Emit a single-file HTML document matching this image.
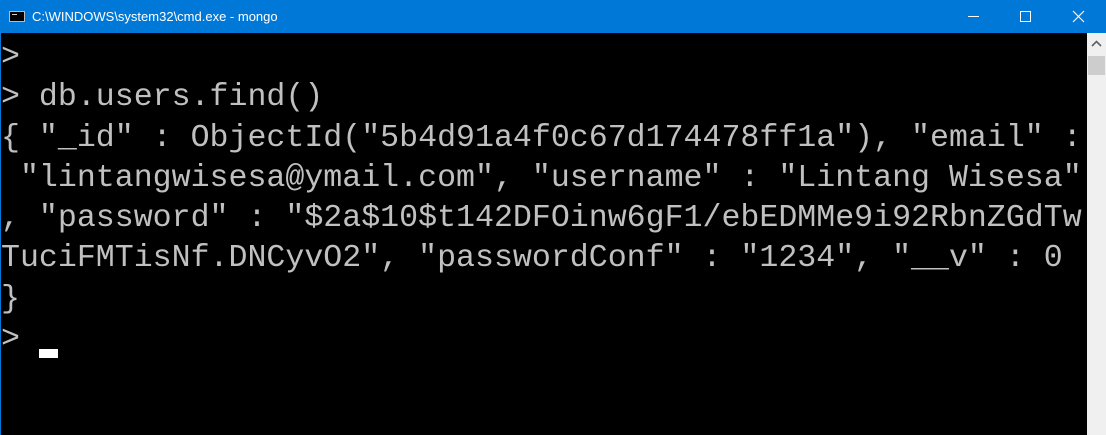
<!DOCTYPE html>
<html><head><style>
html,body{margin:0;padding:0;width:1106px;height:435px;overflow:hidden;background:#000;}
.title{position:absolute;left:0;top:0;width:1106px;height:33px;background:#0078d7;color:#fff;font-family:"Liberation Sans",sans-serif;font-size:13px;}
.title .t{position:absolute;left:32px;top:9px;}
.icon{position:absolute;left:9px;top:11px;width:16px;height:11px;background:#000;border:1px solid #bbb;box-sizing:border-box;}
.icon:after{content:"";position:absolute;left:2px;top:2px;width:5px;height:1px;background:#ccc;}
.lb{position:absolute;left:0;top:33px;width:1px;height:402px;background:#0078d7;}
.sb{position:absolute;left:1087px;top:33px;width:19px;height:402px;background:#f0f0f0;}
.thumb{position:absolute;left:1px;top:23px;width:17px;height:19px;background:#cdcdcd;}
pre{position:absolute;left:1px;top:38px;margin:0;font-family:"Liberation Mono",monospace;font-size:31.6px;line-height:40.3px;color:#c0c0c0;}
.cur{position:absolute;left:39px;top:349px;width:19px;height:9px;background:#fff;}
</style></head><body>
<div class="title"><div class="icon"></div><span class="t">C:\WINDOWS\system32\cmd.exe - mongo</span>
<svg style="position:absolute;left:960px;top:10px" width="140" height="15">
<line x1="8" y1="6.5" x2="19" y2="6.5" stroke="#fff" stroke-width="1"/>
<rect x="60.5" y="1.5" width="10" height="10" fill="none" stroke="#fff" stroke-width="1"/>
<path d="M113 1 L124 12 M124 1 L113 12" stroke="#fff" stroke-width="1.1"/>
</svg></div>
<div class="lb"></div>
<pre>&gt;
&gt; db.users.find()
{ "_id" : ObjectId("5b4d91a4f0c67d174478ff1a"), "email" :
 "lintangwisesa@ymail.com", "username" : "Lintang Wisesa"
, "password" : "$2a$10$t142DFOinw6gF1/ebEDMMe9i92RbnZGdTw
TuciFMTisNf.DNCyvO2", "passwordConf" : "1234", "__v" : 0
}
&gt;</pre>
<div class="cur"></div>
<div class="sb"><svg style="position:absolute;left:4px;top:7px" width="11" height="8"><path d="M1 6 L5.5 1.5 L10 6" fill="none" stroke="#606060" stroke-width="1.6"/></svg><div class="thumb"></div></div>
</body></html>
